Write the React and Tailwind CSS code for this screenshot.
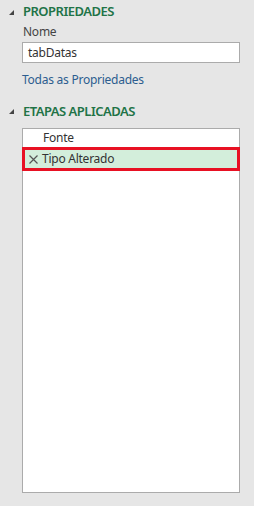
const Tri = () => (
  <svg width="5" height="5" viewBox="0 0 5 5" className="shrink-0">
    <path d="M5 0 L5 5 L0 5 Z" fill="#444" />
  </svg>
);

export default function App() {
  return (
    <div className="w-[254px] h-[506px] bg-[#e6e6e6] text-[12px] tracking-[-0.25px] text-[#444] font-['Noto_Sans',sans-serif] overflow-hidden">
      <div className="flex items-center gap-[9px] pl-[9px] pt-[3px] h-[21px]">
        <Tri />
        <span className="font-semibold text-[13px] text-[#217346] tracking-[-0.5px]">PROPRIEDADES</span>
      </div>
      <div className="pl-[23px] mt-[3px] leading-[16px]">Nome</div>
      <div className="ml-[22px] mt-[2px] w-[218px] h-[21px] bg-white border border-[#ababab] flex items-center pl-[5px] text-[#333]">
        tabDatas
      </div>
      <div className="pl-[22px] mt-[9px] leading-[16px] text-[#2c5d8f]">Todas as Propriedades</div>
      <div className="flex items-center gap-[9px] pl-[9px] mt-[15px] h-[17px]">
        <Tri />
        <span className="font-semibold text-[13px] text-[#217346] tracking-[-0.5px]">ETAPAS APLICADAS</span>
      </div>
      <div className="ml-[22px] mt-[8px] w-[218px] h-[365px] bg-white border border-[#ababab] flex flex-col">
        <div className="h-[18px] flex items-center pl-[20px] text-[#333]">Fonte</div>
        <div className="h-[24px] -mx-[1px] bg-[#d3eedb] border-[3px] border-[#e81123] flex items-center pl-[3px] gap-[3px] text-[#333]">
          <svg width="11" height="11" viewBox="0 0 11 11" className="shrink-0">
            <path d="M1.5 1.5 L9.5 9.5 M9.5 1.5 L1.5 9.5" stroke="#555" strokeWidth="1.2" fill="none" />
          </svg>
          <span>Tipo Alterado</span>
        </div>
      </div>
    </div>
  );
}
